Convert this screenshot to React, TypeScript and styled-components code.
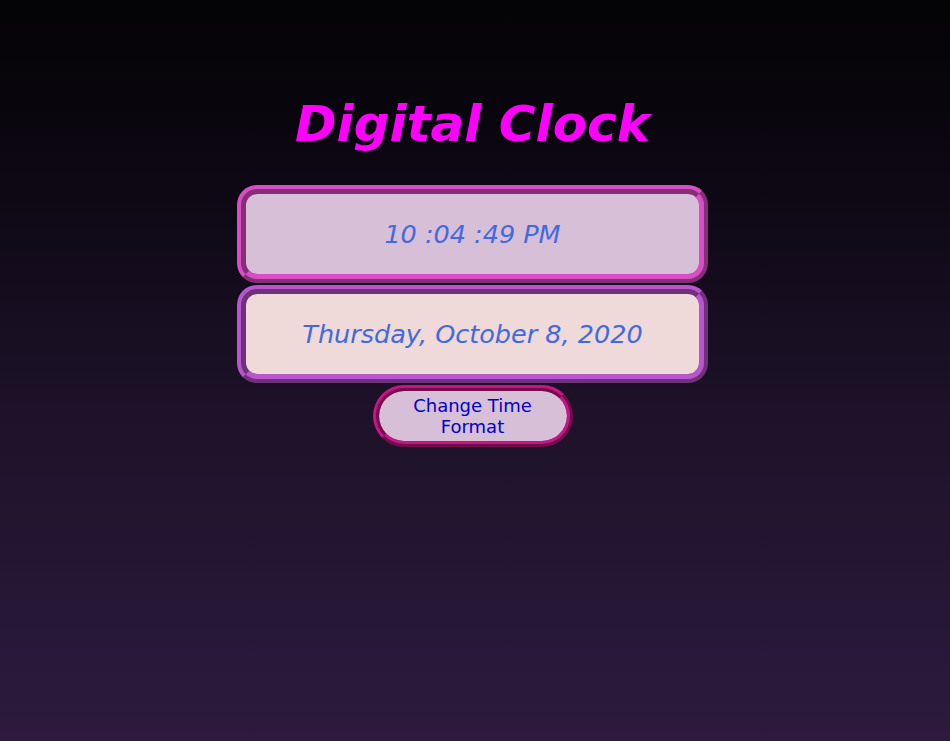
import React from "react";
import styled, { createGlobalStyle } from "styled-components";

const Global = createGlobalStyle`
  html, body { margin: 0; padding: 0; }
  body {
    min-height: 741px;
    background: linear-gradient(180deg, #040305 0%, #0b0610 20%, #1d1229 55%, #2d1a3e 100%);
    font-family: "DejaVu Sans", Verdana, sans-serif;
  }
`;

const Page = styled.main`
  display: flex;
  flex-direction: column;
  align-items: center;
  padding-top: 95px;
  padding-right: 5px;
`;

const Title = styled.h1`
  margin: 0 0 32px;
  font-size: 50px;
  font-weight: bold;
  font-style: italic;
  color: #ff00ff;
  line-height: 58px;
`;

const Panel = styled.div<{ $border: string; $bg: string }>`
  box-sizing: border-box;
  width: 471px;
  height: 98px;
  border: 9px ridge ${(p) => p.$border};
  border-radius: 20px;
  background: ${(p) => p.$bg};
  display: flex;
  align-items: center;
  justify-content: center;
  font-style: italic;
  font-size: 25.5px;
  color: #4169e1;
  margin-bottom: 2px;
`;

const Button = styled.button`
  box-sizing: border-box;
  width: 200px;
  height: 62px;
  border: 6px ridge #c71585;
  border-radius: 31px;
  background: #d8bfd8;
  color: #0000cd;
  font-family: "DejaVu Sans", Verdana, sans-serif;
  font-size: 18px;
  line-height: 21px;
  padding: 0 26px;
  cursor: pointer;
`;

export default function App() {
  return (
    <>
      <Global />
      <Page>
        <Title>Digital Clock</Title>
        <Panel $border="#d94ec5" $bg="#d8bfd8">10 :04 :49 PM</Panel>
        <Panel $border="#b955cf" $bg="#efd9d9">Thursday, October 8, 2020</Panel>
        <Button>Change Time Format</Button>
      </Page>
    </>
  );
}
